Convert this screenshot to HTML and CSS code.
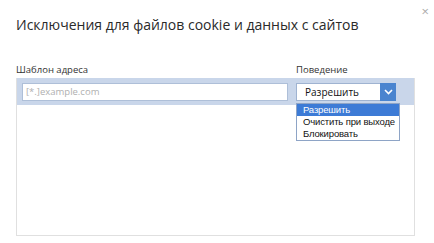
FILE: index.html
```html
<html>
<head>
	<meta http-equiv="content-type" content="text/html;charset=utf-8">
	<title>Исключения</title>
	<link rel="stylesheet" href="styles.css">
</head>
<body>
	<div class="dialog">
		<div class="head">
			<h1 class="title">Исключения для файлов cookie и данных с сайтов</h1>
			<span class="close">&#215;</span>
		</div>

		<div class="labels">
			<span class="lbl-pattern">Шаблон адреса</span>
			<span class="lbl-action">Поведение</span>
		</div>

		<div class="list">
			<div class="row">
				<input class="pattern" type="text" placeholder="[*.]example.com">
				<div class="select">
					<span class="select-text">Разрешить</span>
					<span class="select-btn">
						<svg width="9" height="6" viewBox="0 0 9 6"><path d="M1 1 L4.5 4.5 L8 1" fill="none" stroke="#fff" stroke-width="1.6"/></svg>
					</span>
					<ul class="menu">
						<li class="on">Разрешить</li>
						<li>Очистить при выходе</li>
						<li>Блокировать</li>
					</ul>
				</div>
			</div>
		</div>
	</div>
</body>
</html>
```

FILE: styles.css
```css
body{
	margin:0;
	padding:0;
	background:#fff;
	font-family:"Open Sans","Noto Sans",sans-serif;
	color:#222;
}

.dialog{
	padding:0 19px 0 16px;
}

.head{
	height:48px;
	display:flex;
	align-items:center;
	position:relative;
}
.title{
	margin:0;
	font-size:14px;
	font-weight:400;
	color:#2a2a2a;
}
.close{
	position:absolute;
	right:-14px;
	top:2px;
	font-size:13px;
	color:#aaa;
}

.labels{
	margin-top:15px;
	display:flex;
	font-size:9.5px;
	line-height:14px;
	color:#333;
}
.lbl-pattern{
	width:280px;
}

.list{
	margin-top:1px;
	height:157px;
	border:1px solid #e0e0e0;
	border-top:none;
}
.row{
	height:27px;
	background:#c9d6ea;
	display:flex;
	align-items:center;
	padding:0 0 0 5px;
	gap:8px;
}
.pattern{
	width:266px;
	height:18px;
	box-sizing:border-box;
	border:1px solid #aebfd8;
	background:#fff;
	font-family:inherit;
	font-size:9.5px;
	padding:0 3px;
	outline:none;
}
.pattern::placeholder{
	color:#b0b0b0;
}

.select{
	position:relative;
	width:100px;
	height:18px;
	box-sizing:border-box;
	border:1px solid #9fb3d1;
	background:#fff;
	display:flex;
	align-items:center;
	font-size:10px;
}
.select-text{
	flex:1;
	padding-left:8px;
	color:#111;
}
.select-btn{
	width:16px;
	height:18px;
	margin:-1px -1px -1px 0;
	background:#4a84cf;
	display:flex;
	align-items:center;
	justify-content:center;
}

.menu{
	position:absolute;
	left:-1px;
	top:19px;
	width:104px;
	margin:0;
	padding:0;
	list-style:none;
	background:#fff;
	border:1px solid #8ea4c6;
	box-sizing:border-box;
}
.menu li{
	height:12px;
	line-height:12px;
	padding-left:6px;
	font-family:"Liberation Sans",Arial,sans-serif;
	font-size:9.5px;
	letter-spacing:-0.15px;
	color:#111;
	white-space:nowrap;
}
.menu li.on{
	background:#3d7bd6;
	color:#fff;
}
```
